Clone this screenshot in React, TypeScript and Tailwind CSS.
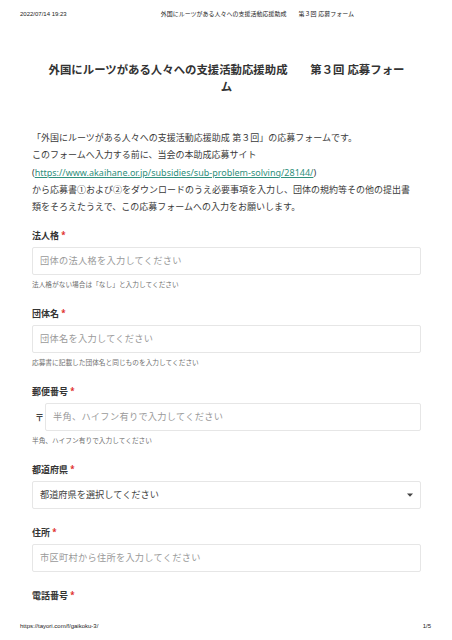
const cjk = { fontFamily: '"Noto Sans", "Noto Sans CJK JP", sans-serif' };
const print = { fontFamily: '"Liberation Sans", "Noto Sans CJK JP", sans-serif' };

function Label({ text }: { text: string }) {
  return (
    <div className="h-[14px] text-[9px] font-bold leading-[14px] text-[#333]">
      {text} <span className="align-[1px] text-[8px] text-[#e02b2b]">*</span>
    </div>
  );
}

function Field({
  label,
  placeholder,
  help,
  zip,
}: {
  label: string;
  placeholder: string;
  help?: string;
  zip?: boolean;
}) {
  return (
    <div className="mb-[16px]">
      <Label text={label} />
      <div className="mt-[5px] flex items-center">
        {zip && (
          <span className="w-[13px] pl-[3px] text-[9px] font-bold text-[#444]">〒</span>
        )}
        <div className="flex h-[28px] flex-1 items-center rounded-[2px] border border-[#e6e6e6] pl-[7px] text-[9.2px] tracking-[0.3px] text-[#9a9a9a]">
          {placeholder}
        </div>
      </div>
      {help && (
        <div className="mt-[5px] h-[10px] text-[6.7px] leading-[10px] text-[#6f6f6f]">{help}</div>
      )}
    </div>
  );
}

export default function App() {
  return (
    <div className="flex h-[640px] flex-col overflow-hidden bg-white" style={cjk}>
      <div className="flex pl-[20px] pt-[10px] text-[6px] leading-[8px] text-[#222]" style={print}>
        <span>2022/07/14 19:23</span>
        <span className="ml-[94px]">外国にルーツがある人々への支援活動応援助成　　第３回 応募フォーム</span>
      </div>

      <div className="pl-[32px] pr-[31px]">
        <h1 className="mt-[43px] text-center text-[11.4px] font-bold leading-[17px] text-[#333]">
          外国にルーツがある人々への支援活動応援助成　　第３回 応募フォー
          <br />ム
        </h1>

        <p className="mt-[34px] text-[9px] leading-[17.25px] text-[#3a3a3a]">
          「外国にルーツがある人々への支援活動応援助成 第３回」の応募フォームです。
          <br />
          このフォームへ入力する前に、当会の本助成応募サイト
          <br />(
          <a className="text-[#2f8f7c] underline underline-offset-[1px]" href="#">
            https://www.akaihane.or.jp/subsidies/sub-problem-solving/28144/
          </a>
          )
          <br />
          から応募書①および②をダウンロードのうえ必要事項を入力し、団体の規約等その他の提出書
          <br />
          類をそろえたうえで、この応募フォームへの入力をお願いします。
        </p>

        <div className="mt-[13px]">
          <Field
            label="法人格"
            placeholder="団体の法人格を入力してください"
            help="法人格がない場合は「なし」と入力してください"
          />
          <Field
            label="団体名"
            placeholder="団体名を入力してください"
            help="応募書に記載した団体名と同じものを入力してください"
          />
          <Field
            label="郵便番号"
            placeholder="半角、ハイフン有りで入力してください"
            help="半角、ハイフン有りで入力してください"
            zip
          />
          <div className="mb-[16px]">
            <Label text="都道府県" />
            <div className="mt-[5px] flex h-[28px] items-center justify-between rounded-[2px] border border-[#e6e6e6] pl-[7px] pr-[7px] text-[9.2px] text-[#444]">
              <span>都道府県を選択してください</span>
              <svg width="6" height="4" viewBox="0 0 6 4">
                <path d="M0 0.5h6L3 3.8z" fill="#444" />
              </svg>
            </div>
          </div>
          <Field label="住所" placeholder="市区町村から住所を入力してください" />
          <Label text="電話番号" />
        </div>
      </div>

      <div
        className="mt-auto flex justify-between pb-[10px] pl-[20px] pr-[21px] text-[6px] leading-[8px] text-[#222]"
        style={print}
      >
        <span>https://tayori.com/f/gaikoku-3/</span>
        <span>1/5</span>
      </div>
    </div>
  );
}
